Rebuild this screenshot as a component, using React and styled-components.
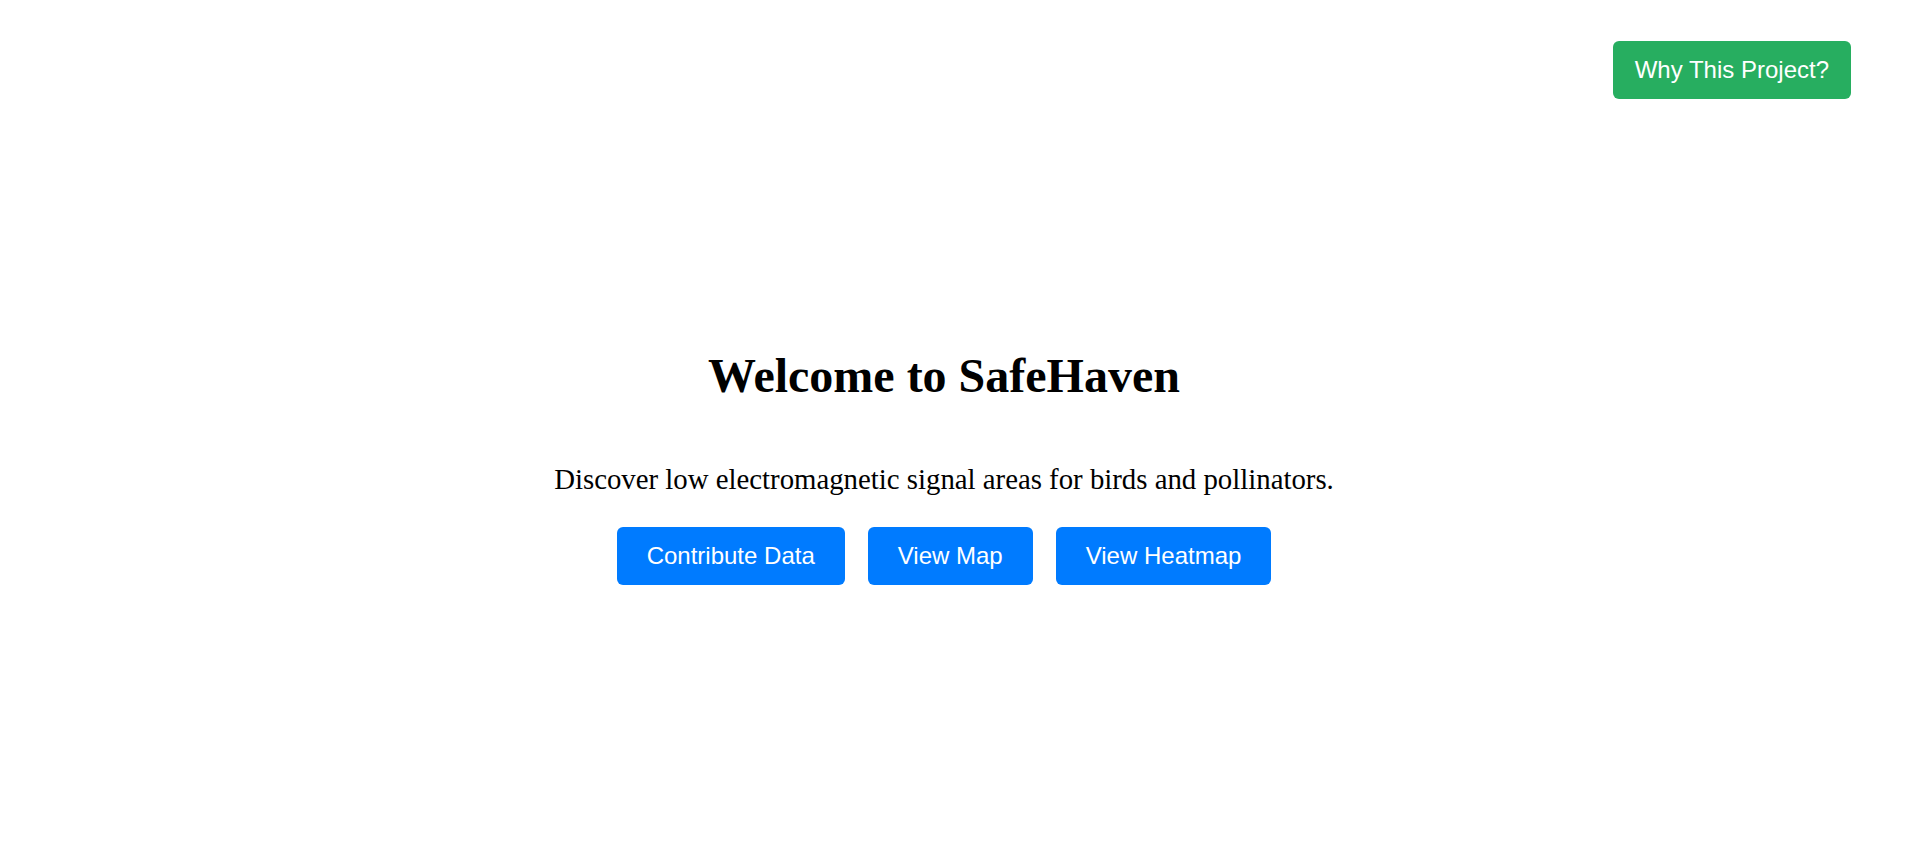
import styled, { createGlobalStyle } from 'styled-components';

const GlobalStyle = createGlobalStyle`
  html, body {
    margin: 0;
    padding: 0;
    background: #ffffff;
  }
  html {
    overflow-y: scroll;
  }
  body {
    font-family: "Liberation Serif", "Times New Roman", serif;
    color: #000000;
  }
`

const Page = styled.div`
  padding: 0 27px 0 0;
  min-height: 890px;
  box-sizing: border-box;
`

const TopBar = styled.div`
  display: flex;
  justify-content: flex-end;
  padding: 41px 37px 0 0;
`

const Hero = styled.main`
  display: flex;
  flex-direction: column;
  align-items: center;
  text-align: center;
  padding-top: 249px;
`

const Title = styled.h1`
  margin: 0;
  font-family: "Liberation Serif", "Times New Roman", serif;
  font-weight: 700;
  font-size: 48px;
  line-height: 56px;
`

const Tagline = styled.p`
  margin: 59px 0 0;
  font-family: "Liberation Serif", "Times New Roman", serif;
  font-size: 28.8px;
  line-height: 33px;
`

const ButtonRow = styled.div`
  display: flex;
  justify-content: center;
  gap: 23px;
  margin-top: 31px;
`

const Button = styled.button`
  font-family: "Liberation Sans", Arial, sans-serif;
  font-size: 24px;
  line-height: 28px;
  color: #ffffff;
  background: #007bff;
  border: none;
  border-radius: 6px;
  padding: 15px 30px;
  cursor: pointer;

  &:hover {
    background: #0069d9;
  }
`

const GreenButton = styled(Button)`
  background: #27ae60;
  padding: 15px 22px;

  &:hover {
    background: #219150;
  }
`

export default function App() {
  return (
    <>
      <GlobalStyle />
      <Page>
        <TopBar>
          <GreenButton>Why This Project?</GreenButton>
        </TopBar>
        <Hero>
          <Title>Welcome to SafeHaven</Title>
          <Tagline>Discover low electromagnetic signal areas for birds and pollinators.</Tagline>
          <ButtonRow>
            <Button>Contribute Data</Button>
            <Button>View Map</Button>
            <Button>View Heatmap</Button>
          </ButtonRow>
        </Hero>
      </Page>
    </>
  )
}
